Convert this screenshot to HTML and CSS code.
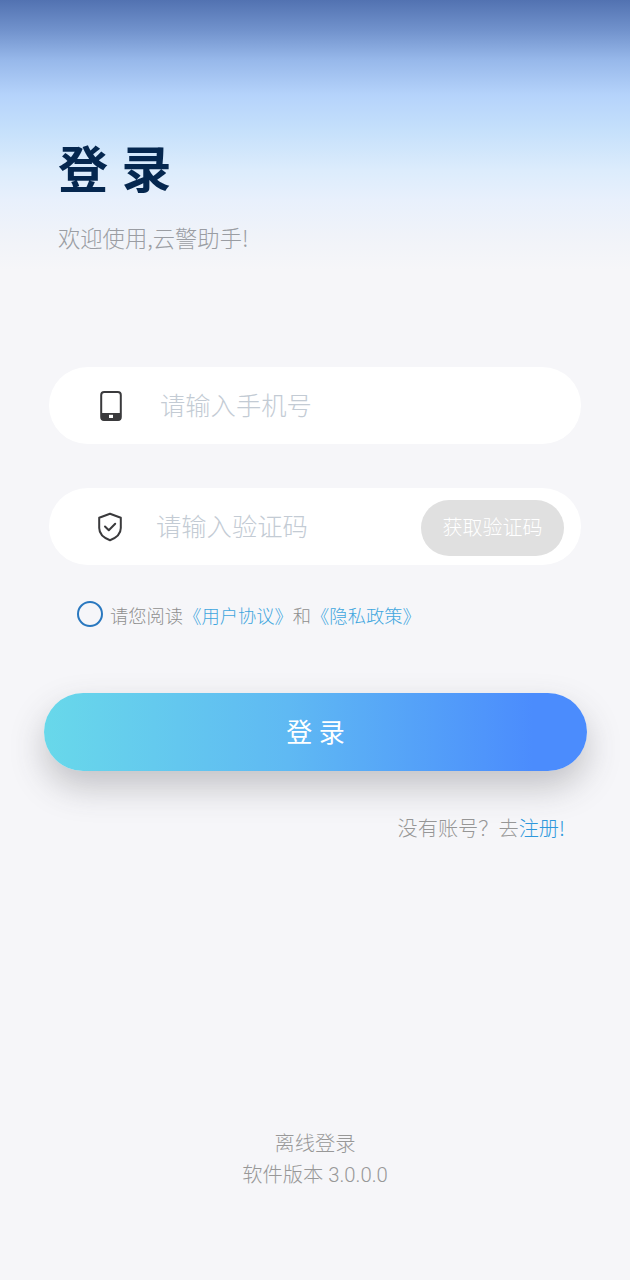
FILE: index.html
```html
<!DOCTYPE html>
<html>
    <head>
        <title>登录</title>
        <link rel="stylesheet" href="styles.css">
    </head>
    <body>
        <div class="login">
            <h1 class="title">登 录</h1>
            <p class="welcome">欢迎使用,云警助手!</p>

            <div class="field field-phone">
                <svg class="icon" width="24" height="32" viewBox="0 0 24 32">
                    <rect x="2.2" y="2" width="19.6" height="28" rx="3" fill="none" stroke="#3a3a3c" stroke-width="2"/>
                    <path d="M2 23h20v4.500a3 3 0 0 1-3 3H5a3 3 0 0 1-3-3z" fill="#3a3a3c"/>
                    <rect x="10" y="24.800" width="4" height="3.200" fill="#fff"/>
                </svg>
                <span class="placeholder">请输入手机号</span>
            </div>

            <div class="field field-code">
                <svg class="icon" width="26" height="30" viewBox="0 0 26 30">
                    <path d="M13 1.800l10.800 4v10.200c0 5.600-4.400 9.800-10.800 12.200C6.600 25.800 2.200 21.600 2.200 16V5.800z" fill="none" stroke="#3a3a3c" stroke-width="2" stroke-linejoin="round"/>
                    <path d="M8 14.500l3.800 3.800 6.400-6.600" fill="none" stroke="#3a3a3c" stroke-width="2" stroke-linecap="round" stroke-linejoin="round"/>
                </svg>
                <span class="placeholder">请输入验证码</span>
                <span class="code-btn">获取验证码</span>
            </div>

            <div class="agree">
                <span class="radio"></span>
                <span class="agree-text">请您阅读<a>《用户协议》</a>和<a>《隐私政策》</a></span>
            </div>

            <div class="submit">登 录</div>

            <p class="register">没有账号&#xFF1F;去<a>注册!</a></p>
        </div>

        <div class="footer">
            <p>离线登录</p>
            <p>软件版本 3.0.0.0</p>
        </div>
    </body>
</html>
```

FILE: styles.css
```css
* {
    margin: 0;
    padding: 0;
    box-sizing: border-box;
}

body {
    width: 630px;
    height: 1280px;
    overflow: hidden;
    font-family: Roboto, "Noto Sans CJK SC", sans-serif;
    font-weight: 300;
    background-color: #f6f6f9;
    background-image: linear-gradient(180deg, #5272b1 0, #7192cc 30px, #97b8ea 60px, #b5d3fb 95px, #c5e0fb 130px, #dcecfc 170px, #e8f0fc 200px, #f0f3f9 235px, #f6f6f9 270px);
    background-repeat: no-repeat;
}

.login {
    padding-top: 134px;
}

.title {
    margin-left: 58px;
    font-size: 50px;
    line-height: 74px;
    font-weight: 700;
    word-spacing: 1px;
    color: #05274f;
}

.welcome {
    margin: 13px 0 0 58px;
    font-family: "Noto Sans CJK SC", sans-serif;
    font-size: 22.3px;
    line-height: 32px;
    color: #9a9da3;
}

.field {
    display: flex;
    align-items: center;
    width: 532px;
    height: 77px;
    margin-left: 49px;
    background: #fff;
    border-radius: 39px;
}

.field-phone {
    margin-top: 114px;
    padding-left: 50px;
}

.field-code {
    margin-top: 44px;
    padding-left: 48px;
}

.field-phone .placeholder {
    margin-left: 37px;
}

.field-code .placeholder {
    margin-left: 33px;
}

.placeholder {
    padding-bottom: 4px;
    font-size: 25.3px;
    color: #c3cbd4;
}

.code-btn {
    width: 143px;
    height: 56px;
    margin: 2px 17px 0 auto;
    border-radius: 28px;
    background: #e0e0e0;
    color: #fff;
    font-size: 20px;
    line-height: 56px;
    text-align: center;
}

.agree {
    display: flex;
    align-items: center;
    margin: 36px 0 0 77px;
    height: 26px;
}

.radio {
    width: 26px;
    height: 26px;
    border: 2px solid #2a78bf;
    border-radius: 50%;
}

.agree-text {
    margin-left: 7px;
    font-size: 18.3px;
    color: #8f8f8f;
    position: relative;
    top: 1px;
}

.agree-text a {
    color: #3fa6de;
}

.submit {
    width: 543px;
    height: 78px;
    margin: 66px 0 0 44px;
    border-radius: 39px;
    background: linear-gradient(90deg, #68d8ea 0, #5fb9f3 45%, #4b8cfd 90%);
    box-shadow: 0 16px 34px rgba(60, 60, 70, 0.28);
    color: #fff;
    font-size: 26px;
    font-weight: 400;
    line-height: 80px;
    text-align: center;
}

.register {
    margin: 42px 65px 0 0;
    font-family: "Noto Sans CJK SC", sans-serif;
    font-size: 20.2px;
    line-height: 30px;
    text-align: right;
    color: #969696;
}

.register a {
    color: #2f98dc;
}

.footer {
    margin-top: 286px;
    text-align: center;
    font-size: 20.3px;
    line-height: 31px;
    color: #989898;
}
```
